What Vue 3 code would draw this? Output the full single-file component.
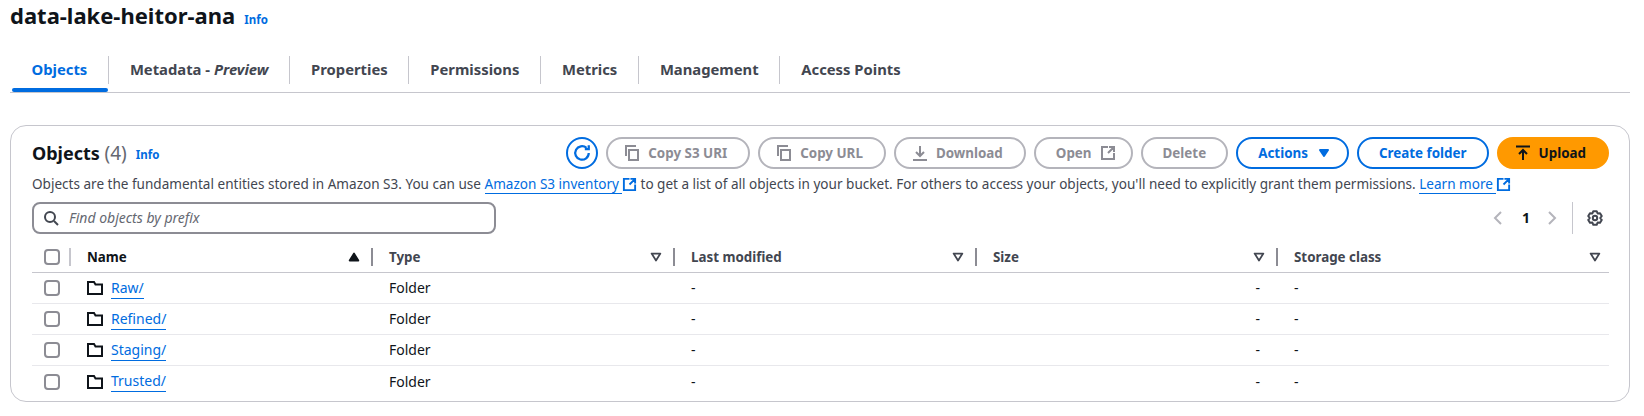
<template>
  <div class="page">
    <div class="title-row">
      <h1>data-lake-heitor-ana</h1>
      <a class="info">Info</a>
    </div>

    <div class="tabs">
      <div
        v-for="(tab, i) in tabs"
        :key="tab.label"
        class="tab"
        :class="{ active: i === 0 }"
      >
        <span class="tab-label">{{ tab.label }}<em v-if="tab.em"> - <i>{{ tab.em }}</i></em></span>
      </div>
    </div>

    <section class="card">
      <div class="head">
        <h2>Objects <span class="count">(4)</span></h2>
        <a class="info small">Info</a>
        <div class="actions">
          <button class="btn icon-btn">
            <svg width="18" height="18" viewBox="0 0 16 16" fill="none" stroke="currentColor" stroke-width="2">
              <path d="M14 8a6 6 0 1 1-2-4.500" />
              <path d="M14 1v3.500h-3.500" />
            </svg>
          </button>
          <button class="btn off lead">
            <svg width="16" height="16" viewBox="0 0 16 16" fill="none" stroke="currentColor" stroke-width="2">
              <path d="M5 5h9v10H5z" />
              <path d="M2 11V1h10" />
            </svg>
            Copy S3 URI
          </button>
          <button class="btn off lead">
            <svg width="16" height="16" viewBox="0 0 16 16" fill="none" stroke="currentColor" stroke-width="2">
              <path d="M5 5h9v10H5z" />
              <path d="M2 11V1h10" />
            </svg>
            Copy URL
          </button>
          <button class="btn off lead">
            <svg width="16" height="16" viewBox="0 0 16 16" fill="none" stroke="currentColor" stroke-width="2">
              <path d="M8 1v9.500M4 7l4 4 4-4M1 15h14" />
            </svg>
            Download
          </button>
          <button class="btn off trail">
            Open
            <svg width="16" height="16" viewBox="0 0 16 16" fill="none" stroke="currentColor" stroke-width="2">
              <path d="M8 2H2v12h12V8M8 8l6-6M9 2h5v5" />
            </svg>
          </button>
          <button class="btn off">Delete</button>
          <button class="btn trail">
            Actions
            <svg width="16" height="16" viewBox="0 0 16 16" fill="currentColor" stroke="currentColor" stroke-width="2" stroke-linejoin="round">
              <path d="M4 5h8l-4 6z" />
            </svg>
          </button>
          <button class="btn">Create folder</button>
          <button class="btn primary lead">
            <svg width="16" height="16" viewBox="0 0 16 16" fill="none" stroke="currentColor" stroke-width="2">
              <path d="M1 1.500h14M8 15V5M4 9l4-4 4 4" />
            </svg>
            Upload
          </button>
        </div>
      </div>

      <p class="desc">
        Objects are the fundamental entities stored in Amazon S3. You can use
        <a class="link ext-link">Amazon S3 inventory</a>
        <svg class="ext" width="15" height="15" viewBox="0 0 16 16" fill="none" stroke="currentColor" stroke-width="2">
          <path d="M8 2H2v12h12V8M8 8l6-6M9 2h5v5" />
        </svg>
        to get a list of all objects in your bucket. For others to access your objects, you'll need to explicitly grant them permissions.
        <a class="link ext-link">Learn more</a>
        <svg class="ext" width="15" height="15" viewBox="0 0 16 16" fill="none" stroke="currentColor" stroke-width="2">
          <path d="M8 2H2v12h12V8M8 8l6-6M9 2h5v5" />
        </svg>
      </p>

      <div class="tools">
        <div class="search">
          <svg width="16" height="16" viewBox="0 0 16 16" fill="none" stroke="#424650" stroke-width="2">
            <circle cx="7" cy="7" r="5" />
            <path d="M11 11l4 4" />
          </svg>
          <span>Find objects by prefix</span>
        </div>
        <div class="pager">
          <svg width="16" height="16" viewBox="0 0 16 16" fill="none" stroke="#b4b4bb" stroke-width="2">
            <path d="M11 2L5 8l6 6" />
          </svg>
          <b class="page-num">1</b>
          <svg width="16" height="16" viewBox="0 0 16 16" fill="none" stroke="#b4b4bb" stroke-width="2">
            <path d="M5 2l6 6-6 6" />
          </svg>
          <span class="pager-sep"></span>
          <svg width="16" height="16" viewBox="0 0 16 16" fill="none" stroke="#424650" stroke-width="2" stroke-linejoin="round">
            <circle cx="8" cy="8" r="2.200" />
            <path :d="gearPath" />
          </svg>
        </div>
      </div>

      <div class="table">
        <div class="row header">
          <div class="cell check">
            <span class="box"></span>
          </div>
          <div
            v-for="(col, i) in columns"
            :key="col"
            class="cell"
          >
            <span class="sep" :class="{ light: i === 0 }"></span>
            <span class="col-name">{{ col }}</span>
            <svg width="14" height="14" viewBox="0 0 16 16" stroke-width="2" stroke-linejoin="round">
              <path v-if="i === 0" d="M3 12h10L8 4z" fill="#0f141a" stroke="#0f141a" />
              <path v-else d="M3 4h10l-5 8z" fill="none" stroke="#424650" />
            </svg>
          </div>
        </div>

        <div v-for="folder in folders" :key="folder" class="row">
          <div class="cell check">
            <span class="box"></span>
          </div>
          <div class="cell">
            <svg class="folder" width="16" height="16" viewBox="0 0 16 16" fill="none" stroke="#0f141a" stroke-width="2">
              <path d="M1 14V2h6l1.500 2.500H15V14z" />
            </svg>
            <a class="link">{{ folder }}</a>
          </div>
          <div class="cell">Folder</div>
          <div class="cell">-</div>
          <div class="cell end">-</div>
          <div class="cell">-</div>
        </div>
      </div>
    </section>
  </div>
</template>

<script setup>
const tabs = [
  { label: 'Objects' },
  { label: 'Metadata', em: 'Preview' },
  { label: 'Properties' },
  { label: 'Permissions' },
  { label: 'Metrics' },
  { label: 'Management' },
  { label: 'Access Points' }
]

const columns = ['Name', 'Type', 'Last modified', 'Size', 'Storage class']

const folders = ['Raw/', 'Refined/', 'Staging/', 'Trusted/']

// six tooth cog outline for the preferences button
function point(angle, r) {
  const rad = (angle * Math.PI) / 180
  return `${(8 + r * Math.cos(rad)).toFixed(2)} ${(8 + r * Math.sin(rad)).toFixed(2)}`
}

const gearPath =
  [0, 60, 120, 180, 240, 300]
    .map((a) => {
      const t = a - 90
      return `${point(t - 30, 5.2)} L${point(t - 14, 7)} L${point(t + 14, 7)} L${point(t + 30, 5.2)}`
    })
    .reduce((d, part, i) => d + (i === 0 ? 'M' : 'L') + part + ' ', '') + 'Z'
</script>

<style>
body {
  background: #fff;
}
</style>

<style scoped>
.page {
  width: 1644px;
  height: 416px;
  overflow: hidden;
  box-sizing: border-box;
  padding: 0 14px 0 10px;
  font-family: "Noto Sans", sans-serif;
  font-size: 14px;
  line-height: 20px;
  color: #0f141a;
}

.title-row {
  display: flex;
  align-items: baseline;
  gap: 9px;
  height: 30px;
}

h1 {
  margin: 0;
  font-size: 22px;
  line-height: 30px;
  font-weight: 700;
}

.info {
  color: #006ce0;
  font-size: 11.500px;
  font-weight: 700;
}

.tabs {
  display: flex;
  margin-top: 24px;
  height: 38px;
  border-bottom: 1px solid #c6c6cd;
}

.tab {
  position: relative;
  display: flex;
  align-items: center;
  height: 38px;
  box-sizing: border-box;
  padding: 0 21.300px 8px;
  font-weight: 700;
  font-size: 14.800px;
  color: #424650;
}

.tab:first-child {
  padding-left: 21.500px;
}

.tab:not(:last-child)::after {
  content: "";
  position: absolute;
  right: 0;
  top: 2px;
  height: 28px;
  width: 1px;
  background: #c6c6cd;
}

.tab em {
  font-style: normal;
}

.tab i {
  font-style: italic;
}

.tab.active {
  color: #006ce0;
}

.tab.active::before {
  content: "";
  position: absolute;
  left: 2px;
  right: 1px;
  bottom: 0;
  height: 4px;
  border-radius: 2px;
  background: #006ce0;
}

.card {
  margin-top: 32px;
  height: 277px;
  box-sizing: border-box;
  border: 1px solid #c6c6cd;
  border-radius: 16px;
  padding: 11px 20px 0 21px;
}

.head {
  display: flex;
  align-items: center;
  height: 32px;
}

h2 {
  margin: 0;
  font-size: 18px;
  font-weight: 700;
  line-height: 24px;
}

.count {
  font-weight: 400;
  font-size: 19px;
  color: #656871;
}

.small {
  margin-left: 9px;
  margin-top: 4px;
}

.actions {
  margin-left: auto;
  display: flex;
  gap: 8px;
}

.btn {
  display: flex;
  align-items: center;
  justify-content: center;
  gap: 8px;
  height: 32px;
  padding: 0 20px;
  box-sizing: border-box;
  border: 2px solid #006ce0;
  border-radius: 16px;
  background: #fff;
  color: #006ce0;
  font: 700 13.400px "Noto Sans", sans-serif;
}

.lead {
  padding: 0 21px 0 16px;
}

.trail {
  padding: 0 15px 0 20px;
}

.icon-btn {
  width: 32px;
  padding: 0;
}

.off {
  border-color: #b4b4bb;
  color: #8c8c94;
}

.primary {
  border-color: #ff9900;
  background: #ff9900;
  color: #0f141a;
}

.desc {
  margin: 5px 0 0;
  height: 20px;
  white-space: nowrap;
  color: #424650;
  font-size: 13.550px;
}

.link {
  color: #006ce0;
  border-bottom: 1px solid #006ce0;
}

.ext-link {
  padding-right: 3px;
}

.ext {
  color: #006ce0;
  vertical-align: -3px;
}

.tools {
  display: flex;
  align-items: center;
  justify-content: space-between;
  margin-top: 8px;
  height: 32px;
}

.search {
  display: flex;
  align-items: center;
  gap: 10px;
  width: 464px;
  height: 32px;
  box-sizing: border-box;
  padding: 0 9px;
  border: 2px solid #8c8c94;
  border-radius: 8px;
  color: #656871;
  font-style: italic;
}

.pager {
  display: flex;
  align-items: center;
  gap: 14px;
  padding-right: 6px;
}

.page-num {
  margin-left: 2px;
}

.pager-sep {
  width: 1px;
  height: 32px;
  margin-left: -2px;
  background: #c6c6cd;
}

.row {
  display: grid;
  grid-template-columns: 38px 302px 302px 302px 301px 1fr;
  height: 31px;
  border-bottom: 1px solid #e8e8ec;
  box-sizing: border-box;
}

.row:last-child {
  border-bottom: none;
}

.header {
  height: 31px;
  margin-top: 8px;
  border-bottom: 1px solid #c6c6cd;
  font-weight: 700;
  font-size: 13.350px;
  color: #424650;
}

.header .cell:nth-child(2) {
  color: #0f141a;
}

.cell {
  position: relative;
  display: flex;
  align-items: center;
  padding-left: 17px;
}

.header .cell {
  padding-right: 11px;
}

.header .cell:last-child {
  padding-right: 7px;
}

.header .check {
  padding: 0 0 0 12px;
}

.check {
  padding-left: 12px;
}

.box {
  width: 16px;
  height: 16px;
  box-sizing: border-box;
  border: 2px solid #8c8c94;
  border-radius: 4px;
}

.sep {
  position: absolute;
  left: -1px;
  top: 6px;
  width: 2px;
  height: 18px;
  background: #8c8c94;
}

.sep.light {
  background: #c6c6cd;
}

.col-name {
  flex: 1;
}

.folder {
  margin-right: 8px;
}

.end {
  justify-content: flex-end;
  padding-right: 17px;
}
</style>
